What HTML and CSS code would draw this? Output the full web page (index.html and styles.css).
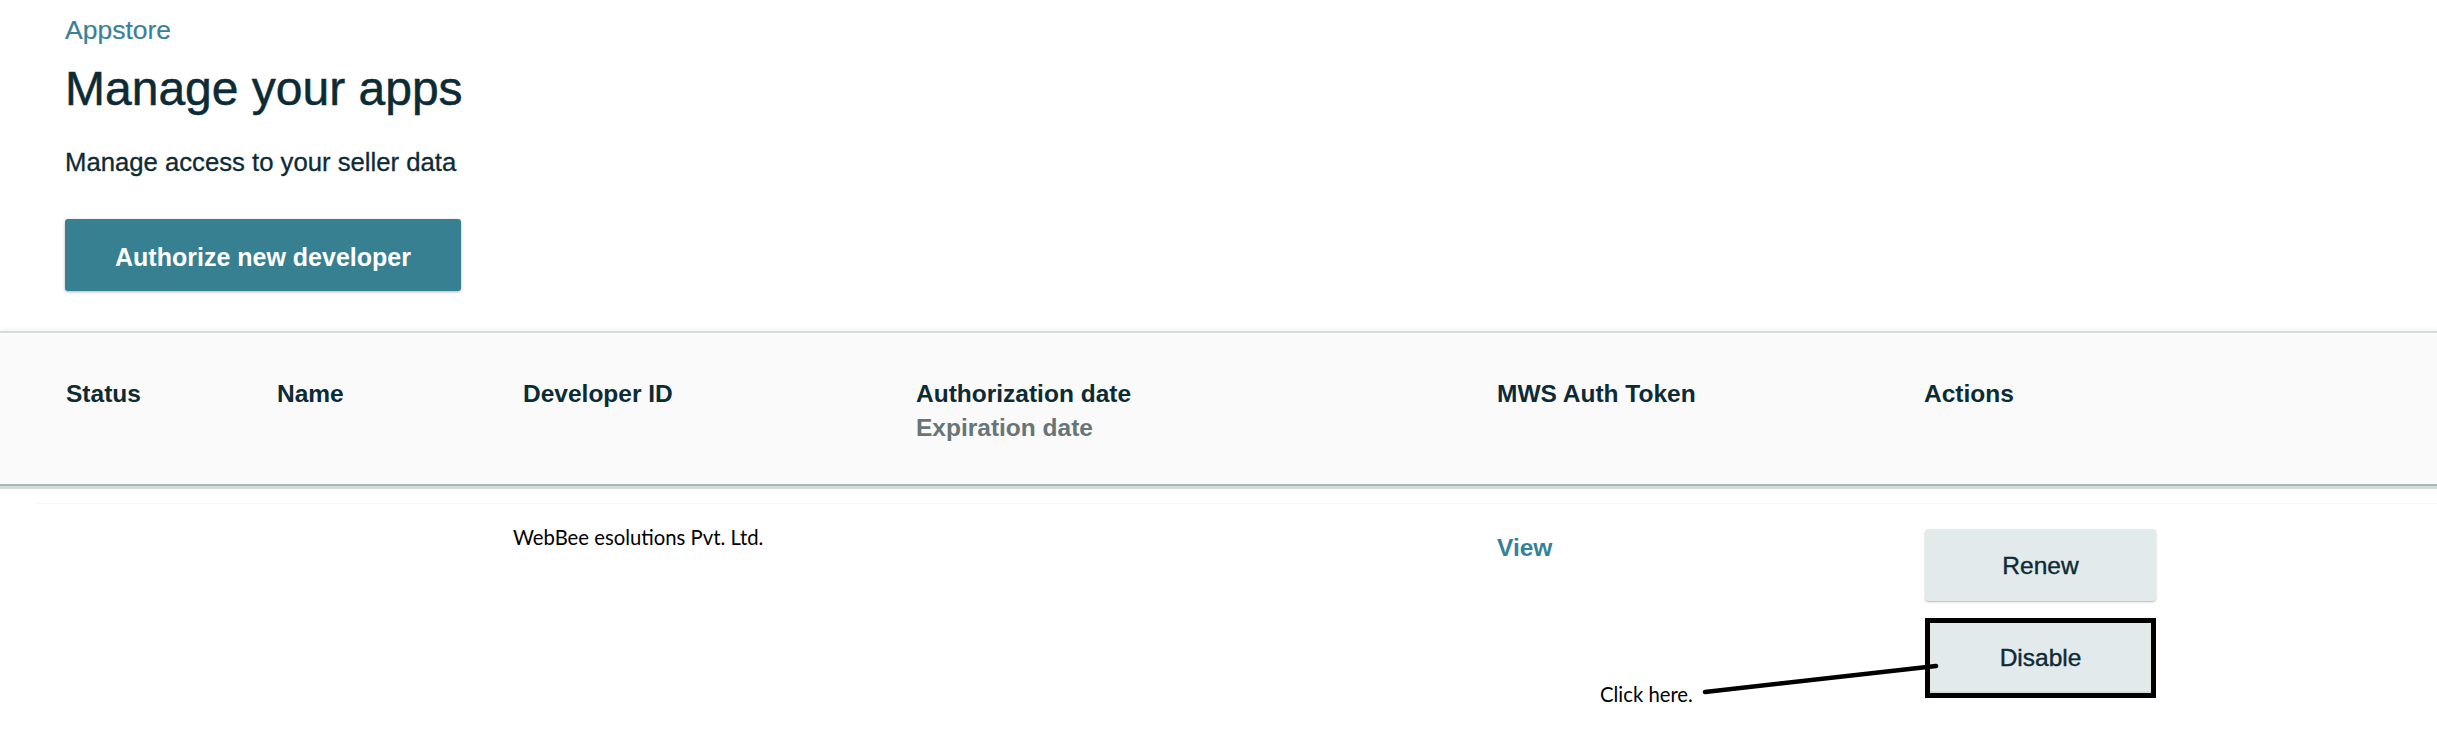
FILE: index.html
```html
<!DOCTYPE html>
<html lang="en">
<head>
<meta charset="utf-8">
<title>Manage your apps</title>
<link rel="stylesheet" href="styles.css">
</head>
<body>
<div class="top">
  <a class="crumb" href="#">Appstore</a>
  <h1 class="title">Manage your apps</h1>
  <p class="sub">Manage access to your seller data</p>
  <button class="btn-primary" type="button">Authorize new developer</button>
</div>
<div class="thead">
  <div class="th">Status</div>
  <div class="th">Name</div>
  <div class="th">Developer ID</div>
  <div class="th">Authorization date<span class="th-sub">Expiration date</span></div>
  <div class="th">MWS Auth Token</div>
  <div class="th">Actions</div>
</div>
<div class="row">
  <div class="td"></div>
  <div class="td"></div>
  <div class="td td-dev"><span class="note">WebBee esolutions Pvt. Ltd.</span></div>
  <div class="td"></div>
  <div class="td td-token"><a class="link" href="#">View</a></div>
  <div class="td td-actions">
    <button class="btn" type="button">Renew</button>
    <button class="btn btn-marked" type="button">Disable</button>
  </div>
</div>
<div class="annot">
  <span class="note annot-text">Click here.</span>
  <svg class="annot-line" width="2437" height="751" viewBox="0 0 2437 751" aria-hidden="true">
    <line x1="1705" y1="692" x2="1936" y2="666" stroke="#000" stroke-width="4.5" stroke-linecap="round"/>
  </svg>
</div>
</body>
</html>
```

FILE: styles.css
```css
html, body {
  margin: 0;
  padding: 0;
  background: #ffffff;
}
body {
  position: relative;
  width: 2437px;
  height: 751px;
  overflow: hidden;
  font-family: "Liberation Sans", Arial, sans-serif;
  color: #0d2b35;
}
.top {
  padding: 15px 0 0 65px;
}
.crumb {
  display: block;
  font-size: 26.5px;
  line-height: 30px;
  color: #3a8196;
  text-decoration: none;
  -webkit-text-stroke: 0.2px #3a8196;
}
.title {
  margin: 16px 0 0 0;
  font-size: 48px;
  line-height: 56px;
  font-weight: normal;
  color: #0d2b35;
  -webkit-text-stroke: 0.5px #0d2b35;
}
.sub {
  margin: 30px 0 0 0;
  font-size: 25.7px;
  line-height: 30px;
  color: #0d2b35;
  -webkit-text-stroke: 0.3px #0d2b35;
}
.btn-primary {
  display: block;
  margin: 42px 0 0 0;
  width: 396px;
  height: 72px;
  padding: 4px 0 0 0;
  border: 0;
  border-radius: 3px;
  background: #378092;
  box-shadow: 0 1px 3px rgba(0, 0, 0, 0.3);
  color: #ffffff;
  font-family: "Liberation Sans", Arial, sans-serif;
  font-size: 25px;
  font-weight: bold;
  line-height: 68px;
  text-align: center;
}
.thead,
.row {
  display: grid;
  grid-template-columns: 211px 246px 393px 581px 427px 1fr;
}
.thead {
  margin-top: 40px;
  padding: 44px 0 39px 66px;
  background: #fafafa;
  border-top: 2px solid #d5dbdb;
  border-bottom: 2px solid #aab7b8;
  box-shadow: 0 3px 0 #d5dbdb, 0 -2px 4px rgba(0, 0, 0, 0.05);
}
.th {
  font-size: 24.5px;
  line-height: 34px;
  font-weight: bold;
  color: #0d2b35;
}
.th-sub {
  display: block;
  color: #687576;
}
.row {
  margin: 17px 0 0 37px;
  padding-left: 29px;
  border-top: 1px solid #f5f6f6;
}
.td-dev {
  padding-top: 21px;
  margin-left: -10px;
}
.note {
  font-family: Lato, "Liberation Sans", sans-serif;
  font-size: 20.3px;
  line-height: 24px;
  color: #000000;
}
.td-token {
  padding-top: 27px;
}
.link {
  font-size: 24.5px;
  line-height: 34px;
  font-weight: bold;
  color: #34829a;
  text-decoration: none;
}
.td-actions {
  display: flex;
  flex-direction: column;
  align-items: flex-start;
  gap: 17px;
  padding-top: 25px;
  padding-left: 1px;
}
.btn {
  box-sizing: border-box;
  width: 231px;
  height: 72px;
  padding: 2px 0 0 0;
  border: 0;
  border-radius: 4px;
  background: #e3eaeb;
  box-shadow: 0 1px 2px rgba(0, 0, 0, 0.28);
  color: #0d2b35;
  font-family: "Liberation Sans", Arial, sans-serif;
  font-size: 24.5px;
  line-height: 70px;
  text-align: center;
  -webkit-text-stroke: 0.4px #0d2b35;
}
.btn-marked {
  height: 80px;
  padding: 0;
  border: 5px solid #000000;
  border-radius: 0;
  box-shadow: inset 0 -2px 0 #d3d9da;
  line-height: 70px;
}
.annot {
  position: absolute;
  left: 0;
  top: 0;
  width: 2437px;
  height: 751px;
  pointer-events: none;
}
.annot-text {
  position: absolute;
  left: 1600px;
  top: 682px;
}
.annot-line {
  position: absolute;
  left: 0;
  top: 0;
}
```
